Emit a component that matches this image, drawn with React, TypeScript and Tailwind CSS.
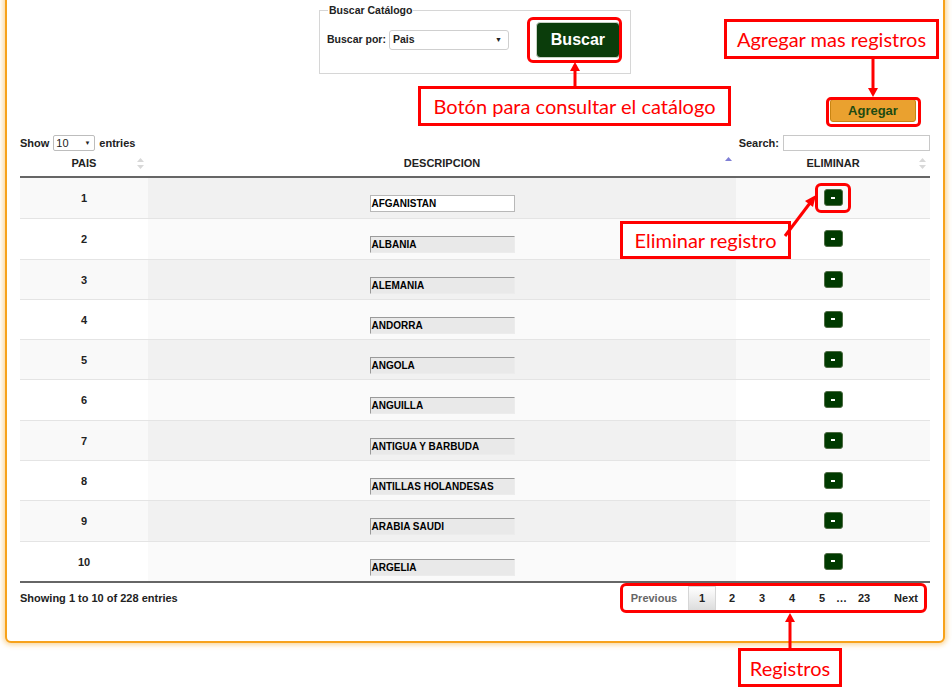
import React from "react";

const countries = [
  "AFGANISTAN",
  "ALBANIA",
  "ALEMANIA",
  "ANDORRA",
  "ANGOLA",
  "ANGUILLA",
  "ANTIGUA Y BARBUDA",
  "ANTILLAS HOLANDESAS",
  "ARABIA SAUDI",
  "ARGELIA",
];

function SortIcon({ active }: { active?: boolean }) {
  return (
    <svg width="7" height="11" viewBox="0 0 7 11" className="shrink-0">
      <path d="M3.5 0 L7 4 H0 Z" fill={active ? "#7f7fd5" : "#d8d8d8"} />
      {!active && <path d="M0 7 H7 L3.5 11 Z" fill="#d8d8d8" />}
    </svg>
  );
}

function Annotation({ text, className }: { text: string; className: string }) {
  return (
    <div
      className={`absolute flex items-center justify-center border-[3px] border-[#ff0000] bg-white font-['Lato',sans-serif] text-[20px] font-normal leading-none text-[#ff0000] ${className}`}
    >
      {text}
    </div>
  );
}

export default function App() {
  return (
    <div className="relative h-[687px] w-[952px] overflow-hidden bg-white font-['Liberation_Sans',sans-serif] text-[11px] font-bold text-[#222]">
      {/* card */}
      <div className="-mt-[10px] ml-[5px] h-[653px] w-[940px] rounded-b-[6px] border-2 border-[#f7a21b] bg-white shadow-[0_0_5px_2px_rgba(245,166,35,0.45)]">
        <div className="pt-[12px]">
          <fieldset className="mx-auto w-[312px] border border-[#d6d6d6] px-[7px] pb-[15px] pt-[6px]">
            <legend className="ml-[1px] px-[1px] text-[10.5px] leading-[12px]">Buscar Catálogo</legend>
            <div className="flex items-center">
              <span className="text-[10.5px]">Buscar por:</span>
              <div className="ml-[3px] flex h-[20px] w-[120px] items-center justify-between rounded-[3px] border border-[#cfcfcf] bg-white pl-[3px] pr-[6px] text-[10.5px]">
                <span>Pais</span>
                <span className="text-[7px]">▼</span>
              </div>
              <button className="ml-[27px] flex h-[36px] w-[84px] items-center justify-center rounded-[4px] border border-[#c9d3c6] bg-[#0b3d0b] text-[16px] font-bold text-white">
                Buscar
              </button>
            </div>
          </fieldset>
        </div>

        <div className="flex justify-end pr-[27px] pt-[25px]">
          <button className="flex h-[23px] w-[86px] items-center justify-center rounded-[3px] border border-[#c88412] bg-[#eaa12f] text-[13px] font-bold text-[#1e4a12]">
            Agregar
          </button>
        </div>

        <div className="px-[13px] pt-[13px]">
          <div className="flex h-[16px] items-center justify-between">
            <div className="flex items-center gap-[4px]">
              <span>Show</span>
              <div className="flex h-[16px] w-[42px] items-center justify-between rounded-[2px] border border-[#bdbdbd] bg-white pl-[2px] pr-[4px]">
                <span className="font-normal">10</span>
                <span className="text-[6px]">▼</span>
              </div>
              <span>entries</span>
            </div>
            <div className="flex items-center gap-[4px]">
              <span>Search:</span>
              <div className="h-[16px] w-[147px] border border-[#c8c8c8] bg-white" />
            </div>
          </div>

          {/* header */}
          <div className="grid h-[27px] grid-cols-[128px_588px_194px] border-b-2 border-[#666]">
            <div className="relative flex items-center justify-center">
              PAIS
              <span className="absolute right-[4px] top-[7px]"><SortIcon /></span>
            </div>
            <div className="relative flex items-center justify-center">
              DESCRIPCION
              <span className="absolute right-[4px] top-[6px]"><SortIcon active /></span>
            </div>
            <div className="relative flex items-center justify-center">
              ELIMINAR
              <span className="absolute right-[4px] top-[7px]"><SortIcon /></span>
            </div>
          </div>

          {/* rows */}
          {countries.map((c, i) => {
            const odd = i % 2 === 0;
            return (
              <div
                key={c}
                className={`grid h-[40.3px] grid-cols-[128px_588px_194px] ${i > 0 ? "border-t border-[#e4e4e4]" : ""}`}
              >
                <div className={`pt-[12px] text-center ${odd ? "bg-[#f9f9f9]" : "bg-white"}`}>{i + 1}</div>
                <div className={`flex justify-center pt-[17px] ${odd ? "bg-[#f1f1f1]" : "bg-[#fafafa]"}`}>
                  <div
                    className={`h-[17px] w-[145px] pl-[1px] text-[10px] leading-[15px] text-black ${
                      i === 0
                        ? "border border-[#b8b8b8] bg-white"
                        : "border border-[#ececec] border-t-[#9a9a9a] border-l-[#9a9a9a] bg-[#e9e9e9]"
                    }`}
                  >
                    {c}
                  </div>
                </div>
                <div className={`flex justify-center pt-[11px] ${odd ? "bg-[#f9f9f9]" : "bg-white"}`}>
                  <button className="flex h-[17px] w-[19px] items-center justify-center rounded-[3px] border border-[#4d6b43] bg-[#003a00]">
                    <span className="h-[2px] w-[4px] bg-white" />
                  </button>
                </div>
              </div>
            );
          })}

          {/* footer */}
          <div className="flex items-center justify-between border-t-2 border-[#666] pt-[3px]">
            <span>Showing 1 to 10 of 228 entries</span>
            <div className="flex h-[25px] items-center">
              <span className="w-[68px] text-center text-[#666]">Previous</span>
              <span className="flex h-[25px] w-[28px] items-center justify-center border border-[#d6d6d6] bg-gradient-to-b from-white to-[#dcdcdc]">1</span>
              {["2", "3", "4", "5"].map((p) => (
                <span key={p} className="ml-[2px] flex h-[25px] w-[28px] items-center justify-center">{p}</span>
              ))}
              <span className="w-[10px] text-center">…</span>
              <span className="flex h-[25px] w-[36px] items-center justify-center">23</span>
              <span className="w-[48px] text-center">Next</span>
            </div>
          </div>
        </div>
      </div>

      {/* red annotation outlines */}
      <div className="absolute left-[527px] top-[17px] h-[46px] w-[95px] rounded-[6px] border-[3px] border-[#ff0000]" />
      <div className="absolute left-[826px] top-[97px] h-[30px] w-[95px] rounded-[5px] border-[3px] border-[#ff0000]" />
      <div className="absolute left-[815px] top-[183px] h-[30px] w-[36px] rounded-[6px] border-[3px] border-[#ff0000]" />
      <div className="absolute left-[620px] top-[583px] h-[30px] w-[307px] rounded-[6px] border-[3px] border-[#ff0000]" />

      <Annotation text="Botón para consultar el catálogo" className="left-[418px] top-[86px] h-[40px] w-[313px]" />
      <Annotation text="Agregar mas registros" className="left-[724px] top-[19px] h-[40px] w-[215px]" />
      <Annotation text="Eliminar registro" className="left-[620px] top-[221px] h-[38px] w-[171px]" />
      <Annotation text="Registros" className="left-[738px] top-[648px] h-[39px] w-[104px]" />

      {/* arrows */}
      <svg className="pointer-events-none absolute left-0 top-0" width="952" height="687">
        <g stroke="#ff0000" strokeWidth="3" fill="#ff0000">
          <line x1="575" y1="86" x2="575" y2="70" />
          <path d="M575 62 L570 71 H580 Z" stroke="none" />
          <line x1="873" y1="58" x2="873" y2="89" />
          <path d="M873 97 L868 88 H878 Z" stroke="none" />
          <line x1="785" y1="236" x2="810" y2="203" />
          <path d="M816 195 L805 201 L813 207 Z" stroke="none" />
          <line x1="790" y1="648" x2="790" y2="621" />
          <path d="M790 613 L785 622 H795 Z" stroke="none" />
        </g>
      </svg>
    </div>
  );
}
